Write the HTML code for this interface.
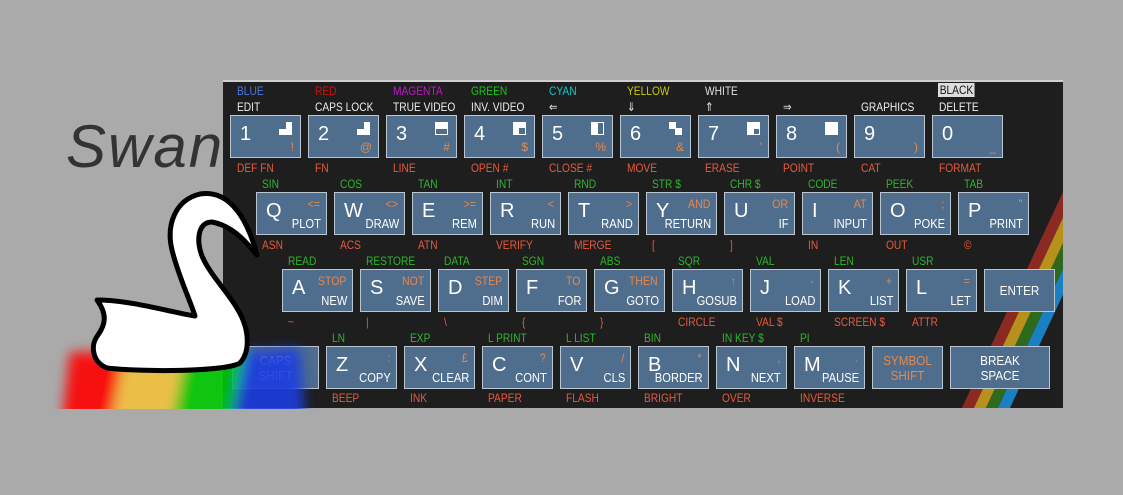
<!DOCTYPE html>
<html><head><meta charset="utf-8"><style>
*{margin:0;padding:0;box-sizing:border-box}
body{width:1123px;height:495px;background:#aaaaaa;position:relative;overflow:hidden;font-family:"Liberation Sans",sans-serif}
#swan-t{position:absolute;left:66px;top:112px;font-size:60px;font-style:italic;color:#333;letter-spacing:2px}
#panel{position:absolute;left:223px;top:80px;width:840px;height:328px;background:#1e1e1e;border-top:2px solid #cfcfcf;overflow:hidden}
.k{position:absolute;width:71px;height:43px;background:#4f6d8c;border:1px solid #bcc6d0;color:#fff}
.m{position:absolute;left:9px;top:7px;font-size:20px}
.s{position:absolute;right:6px;top:4px;font-size:12px;color:#e8884a;transform:scaleX(.88);transform-origin:right}
.w{position:absolute;right:5px;bottom:3px;font-size:13px;transform:scaleX(.86);transform-origin:right;white-space:nowrap}
.sb{position:absolute;right:6px;bottom:3px;font-size:12px;color:#e8884a}
.g{position:absolute;right:8px;top:6px;width:13px;height:13px;background:#fff;overflow:hidden}
.g i{position:absolute;background:#4f6d8c}
.c{position:absolute;width:100%;text-align:center;font-size:13px;line-height:15px;transform:scaleX(.9)}
.l{position:absolute;font-size:12px;white-space:nowrap;transform:scaleX(.85);transform-origin:left}
.wh{color:#eee}.rd{color:#e85a3c}.gr{color:#2fb62f}
</style></head><body>
<div id="swan-t">Swan</div>
<div id="panel">
<svg width="840" height="330" style="position:absolute;left:0;top:0">
<g transform="translate(-223,-80)">
<polygon points="961,408 973,408 1075,190 1063,190" fill="#8b2a22"/>
<polygon points="973,408 985,408 1087,190 1075,190" fill="#b8901c"/>
<polygon points="985,408 997,408 1099,190 1087,190" fill="#2f6a1c"/>
<polygon points="997,408 1009,408 1111,190 1099,190" fill="#1a80c2"/>
</g></svg>
</div>
<div id="keys" style="position:absolute;left:0;top:0">
<div class="l" style="left:237px;top:84px;color:#4a78e8">BLUE</div>
<div class="l" style="left:315px;top:84px;color:#d01010">RED</div>
<div class="l" style="left:393px;top:84px;color:#c018c8">MAGENTA</div>
<div class="l" style="left:471px;top:84px;color:#18c818">GREEN</div>
<div class="l" style="left:549px;top:84px;color:#18c8c8">CYAN</div>
<div class="l" style="left:627px;top:84px;color:#c8c818">YELLOW</div>
<div class="l" style="left:705px;top:84px;color:#e0e0e0">WHITE</div>
<div class="l" style="left:938px;top:83px;color:#111;background:#ddd;padding:0 2px">BLACK</div>
<div class="l wh" style="left:237px;top:100px">EDIT</div>
<div class="l wh" style="left:315px;top:100px">CAPS LOCK</div>
<div class="l wh" style="left:393px;top:100px">TRUE VIDEO</div>
<div class="l wh" style="left:471px;top:100px">INV. VIDEO</div>
<div class="l wh" style="left:549px;top:100px">⇐</div>
<div class="l wh" style="left:627px;top:100px">⇓</div>
<div class="l wh" style="left:705px;top:100px">⇑</div>
<div class="l wh" style="left:783px;top:100px">⇒</div>
<div class="l wh" style="left:861px;top:100px">GRAPHICS</div>
<div class="l wh" style="left:939px;top:100px">DELETE</div>
<div class="k" style="left:230px;top:115px"><span class="m">1</span><span class="g"><i style="left:0;top:0;width:7px;height:7px"></i></span><span class="sb">!</span></div>
<div class="k" style="left:308px;top:115px"><span class="m">2</span><span class="g"><i style="left:0;top:0;width:7px;height:7px"></i></span><span class="sb">@</span></div>
<div class="k" style="left:386px;top:115px"><span class="m">3</span><span class="g"><i style="left:1px;top:7px;width:11px;height:5px"></i></span><span class="sb">#</span></div>
<div class="k" style="left:464px;top:115px"><span class="m">4</span><span class="g"><i style="left:6px;top:6px;width:6px;height:6px"></i></span><span class="sb">$</span></div>
<div class="k" style="left:542px;top:115px"><span class="m">5</span><span class="g"><i style="left:7px;top:1px;width:5px;height:11px"></i></span><span class="sb">%</span></div>
<div class="k" style="left:620px;top:115px"><span class="m">6</span><span class="g"><i style="left:7px;top:0;width:6px;height:6px"></i><i style="left:0;top:7px;width:6px;height:6px"></i></span><span class="sb">&amp;</span></div>
<div class="k" style="left:698px;top:115px"><span class="m">7</span><span class="g"><i style="left:7px;top:7px;width:5px;height:5px"></i><i style="left:1px;top:7px;width:6px;height:5px;background:#fff"></i></span><span class="sb">'</span></div>
<div class="k" style="left:776px;top:115px"><span class="m">8</span><span class="g"></span><span class="sb">(</span></div>
<div class="k" style="left:854px;top:115px"><span class="m">9</span><span class="sb">)</span></div>
<div class="k" style="left:932px;top:115px"><span class="m">0</span><span class="sb">_</span></div>
<div class="l rd" style="left:237px;top:161px">DEF FN</div>
<div class="l rd" style="left:315px;top:161px">FN</div>
<div class="l rd" style="left:393px;top:161px">LINE</div>
<div class="l rd" style="left:471px;top:161px">OPEN #</div>
<div class="l rd" style="left:549px;top:161px">CLOSE #</div>
<div class="l rd" style="left:627px;top:161px">MOVE</div>
<div class="l rd" style="left:705px;top:161px">ERASE</div>
<div class="l rd" style="left:783px;top:161px">POINT</div>
<div class="l rd" style="left:861px;top:161px">CAT</div>
<div class="l rd" style="left:939px;top:161px">FORMAT</div>
<div class="l gr" style="left:262px;top:177px">SIN</div>
<div class="l gr" style="left:340px;top:177px">COS</div>
<div class="l gr" style="left:418px;top:177px">TAN</div>
<div class="l gr" style="left:496px;top:177px">INT</div>
<div class="l gr" style="left:574px;top:177px">RND</div>
<div class="l gr" style="left:652px;top:177px">STR $</div>
<div class="l gr" style="left:730px;top:177px">CHR $</div>
<div class="l gr" style="left:808px;top:177px">CODE</div>
<div class="l gr" style="left:886px;top:177px">PEEK</div>
<div class="l gr" style="left:964px;top:177px">TAB</div>
<div class="k" style="left:256px;top:192px"><span class="m">Q</span><span class="s">&lt;=</span><span class="w">PLOT</span></div>
<div class="k" style="left:334px;top:192px"><span class="m">W</span><span class="s">&lt;&gt;</span><span class="w">DRAW</span></div>
<div class="k" style="left:412px;top:192px"><span class="m">E</span><span class="s">&gt;=</span><span class="w">REM</span></div>
<div class="k" style="left:490px;top:192px"><span class="m">R</span><span class="s">&lt;</span><span class="w">RUN</span></div>
<div class="k" style="left:568px;top:192px"><span class="m">T</span><span class="s">&gt;</span><span class="w">RAND</span></div>
<div class="k" style="left:646px;top:192px"><span class="m">Y</span><span class="s">AND</span><span class="w">RETURN</span></div>
<div class="k" style="left:724px;top:192px"><span class="m">U</span><span class="s">OR</span><span class="w">IF</span></div>
<div class="k" style="left:802px;top:192px"><span class="m">I</span><span class="s">AT</span><span class="w">INPUT</span></div>
<div class="k" style="left:880px;top:192px"><span class="m">O</span><span class="s">;</span><span class="w">POKE</span></div>
<div class="k" style="left:958px;top:192px"><span class="m">P</span><span class="s">"</span><span class="w">PRINT</span></div>
<div class="l rd" style="left:262px;top:238px">ASN</div>
<div class="l rd" style="left:340px;top:238px">ACS</div>
<div class="l rd" style="left:418px;top:238px">ATN</div>
<div class="l rd" style="left:496px;top:238px">VERIFY</div>
<div class="l rd" style="left:574px;top:238px">MERGE</div>
<div class="l rd" style="left:652px;top:238px">[</div>
<div class="l rd" style="left:730px;top:238px">]</div>
<div class="l rd" style="left:808px;top:238px">IN</div>
<div class="l rd" style="left:886px;top:238px">OUT</div>
<div class="l rd" style="left:964px;top:238px">©</div>
<div class="l gr" style="left:288px;top:254px">READ</div>
<div class="l gr" style="left:366px;top:254px">RESTORE</div>
<div class="l gr" style="left:444px;top:254px">DATA</div>
<div class="l gr" style="left:522px;top:254px">SGN</div>
<div class="l gr" style="left:600px;top:254px">ABS</div>
<div class="l gr" style="left:678px;top:254px">SQR</div>
<div class="l gr" style="left:756px;top:254px">VAL</div>
<div class="l gr" style="left:834px;top:254px">LEN</div>
<div class="l gr" style="left:912px;top:254px">USR</div>
<div class="k" style="left:282px;top:269px"><span class="m">A</span><span class="s">STOP</span><span class="w">NEW</span></div>
<div class="k" style="left:360px;top:269px"><span class="m">S</span><span class="s">NOT</span><span class="w">SAVE</span></div>
<div class="k" style="left:438px;top:269px"><span class="m">D</span><span class="s">STEP</span><span class="w">DIM</span></div>
<div class="k" style="left:516px;top:269px"><span class="m">F</span><span class="s">TO</span><span class="w">FOR</span></div>
<div class="k" style="left:594px;top:269px"><span class="m">G</span><span class="s">THEN</span><span class="w">GOTO</span></div>
<div class="k" style="left:672px;top:269px"><span class="m">H</span><span class="s">↑</span><span class="w">GOSUB</span></div>
<div class="k" style="left:750px;top:269px"><span class="m">J</span><span class="s">-</span><span class="w">LOAD</span></div>
<div class="k" style="left:828px;top:269px"><span class="m">K</span><span class="s">+</span><span class="w">LIST</span></div>
<div class="k" style="left:906px;top:269px"><span class="m">L</span><span class="s">=</span><span class="w">LET</span></div>
<div class="k" style="left:984px;top:269px"><span class="c" style="top:13px">ENTER</span></div>
<div class="l rd" style="left:288px;top:315px">~</div>
<div class="l rd" style="left:366px;top:315px">|</div>
<div class="l rd" style="left:444px;top:315px">\</div>
<div class="l rd" style="left:522px;top:315px">{</div>
<div class="l rd" style="left:600px;top:315px">}</div>
<div class="l rd" style="left:678px;top:315px">CIRCLE</div>
<div class="l rd" style="left:756px;top:315px">VAL $</div>
<div class="l rd" style="left:834px;top:315px">SCREEN $</div>
<div class="l rd" style="left:912px;top:315px">ATTR</div>
<div class="l gr" style="left:332px;top:331px">LN</div>
<div class="l gr" style="left:410px;top:331px">EXP</div>
<div class="l gr" style="left:488px;top:331px">L PRINT</div>
<div class="l gr" style="left:566px;top:331px">L LIST</div>
<div class="l gr" style="left:644px;top:331px">BIN</div>
<div class="l gr" style="left:722px;top:331px">IN KEY $</div>
<div class="l gr" style="left:800px;top:331px">PI</div>
<div class="k" style="left:232px;top:346px;width:87px"><span class="c" style="top:6px;color:#dfe6ee">CAPS<br>SHIFT</span></div>
<div class="k" style="left:326px;top:346px"><span class="m">Z</span><span class="s">:</span><span class="w">COPY</span></div>
<div class="k" style="left:404px;top:346px"><span class="m">X</span><span class="s">£</span><span class="w">CLEAR</span></div>
<div class="k" style="left:482px;top:346px"><span class="m">C</span><span class="s">?</span><span class="w">CONT</span></div>
<div class="k" style="left:560px;top:346px"><span class="m">V</span><span class="s">/</span><span class="w">CLS</span></div>
<div class="k" style="left:638px;top:346px"><span class="m">B</span><span class="s">*</span><span class="w">BORDER</span></div>
<div class="k" style="left:716px;top:346px"><span class="m">N</span><span class="s">,</span><span class="w">NEXT</span></div>
<div class="k" style="left:794px;top:346px"><span class="m">M</span><span class="s">.</span><span class="w">PAUSE</span></div>
<div class="k" style="left:872px;top:346px"><span class="c" style="top:6px;color:#e8884a">SYMBOL<br>SHIFT</span></div>
<div class="k" style="left:950px;top:346px;width:100px"><span class="c" style="top:6px">BREAK<br>SPACE</span></div>
<div class="l rd" style="left:332px;top:391px">BEEP</div>
<div class="l rd" style="left:410px;top:391px">INK</div>
<div class="l rd" style="left:488px;top:391px">PAPER</div>
<div class="l rd" style="left:566px;top:391px">FLASH</div>
<div class="l rd" style="left:644px;top:391px">BRIGHT</div>
<div class="l rd" style="left:722px;top:391px">OVER</div>
<div class="l rd" style="left:800px;top:391px">INVERSE</div>
</div>
<svg width="1123" height="495" style="position:absolute;left:0;top:0">
<defs><filter id="b" x="-30%" y="-30%" width="160%" height="160%"><feGaussianBlur stdDeviation="6"/></filter>
<clipPath id="cp"><rect x="0" y="0" width="1123" height="409"/></clipPath></defs>
<g clip-path="url(#cp)"><g filter="url(#b)" opacity="0.9">
<polygon points="70,352 125,352 112,420 62,420" fill="#ff0000"/>
<polygon points="125,352 185,352 172,420 112,420" fill="#f3c23e"/>
<polygon points="185,352 245,352 232,420 172,420" fill="#00c800"/>
<polygon points="245,352 300,348 305,420 232,420" fill="#1a3ee0"/>
</g></g>
<path d="M257,255 L250,247 C240,235 228,225 212,222 C198,222 196,240 202,256 C210,275 228,292 238,310 C250,330 250,352 240,363 C225,372 140,372 107,368 C92,362 90,345 98,335 C105,325 108,315 97,300 C130,300 170,312 195,316 C190,300 178,275 172,250 C166,225 175,200 200,194 C225,190 245,210 257,255 Z" fill="#fff" stroke="#000" stroke-width="5" stroke-linejoin="round"/>
</svg>
</body></html>
